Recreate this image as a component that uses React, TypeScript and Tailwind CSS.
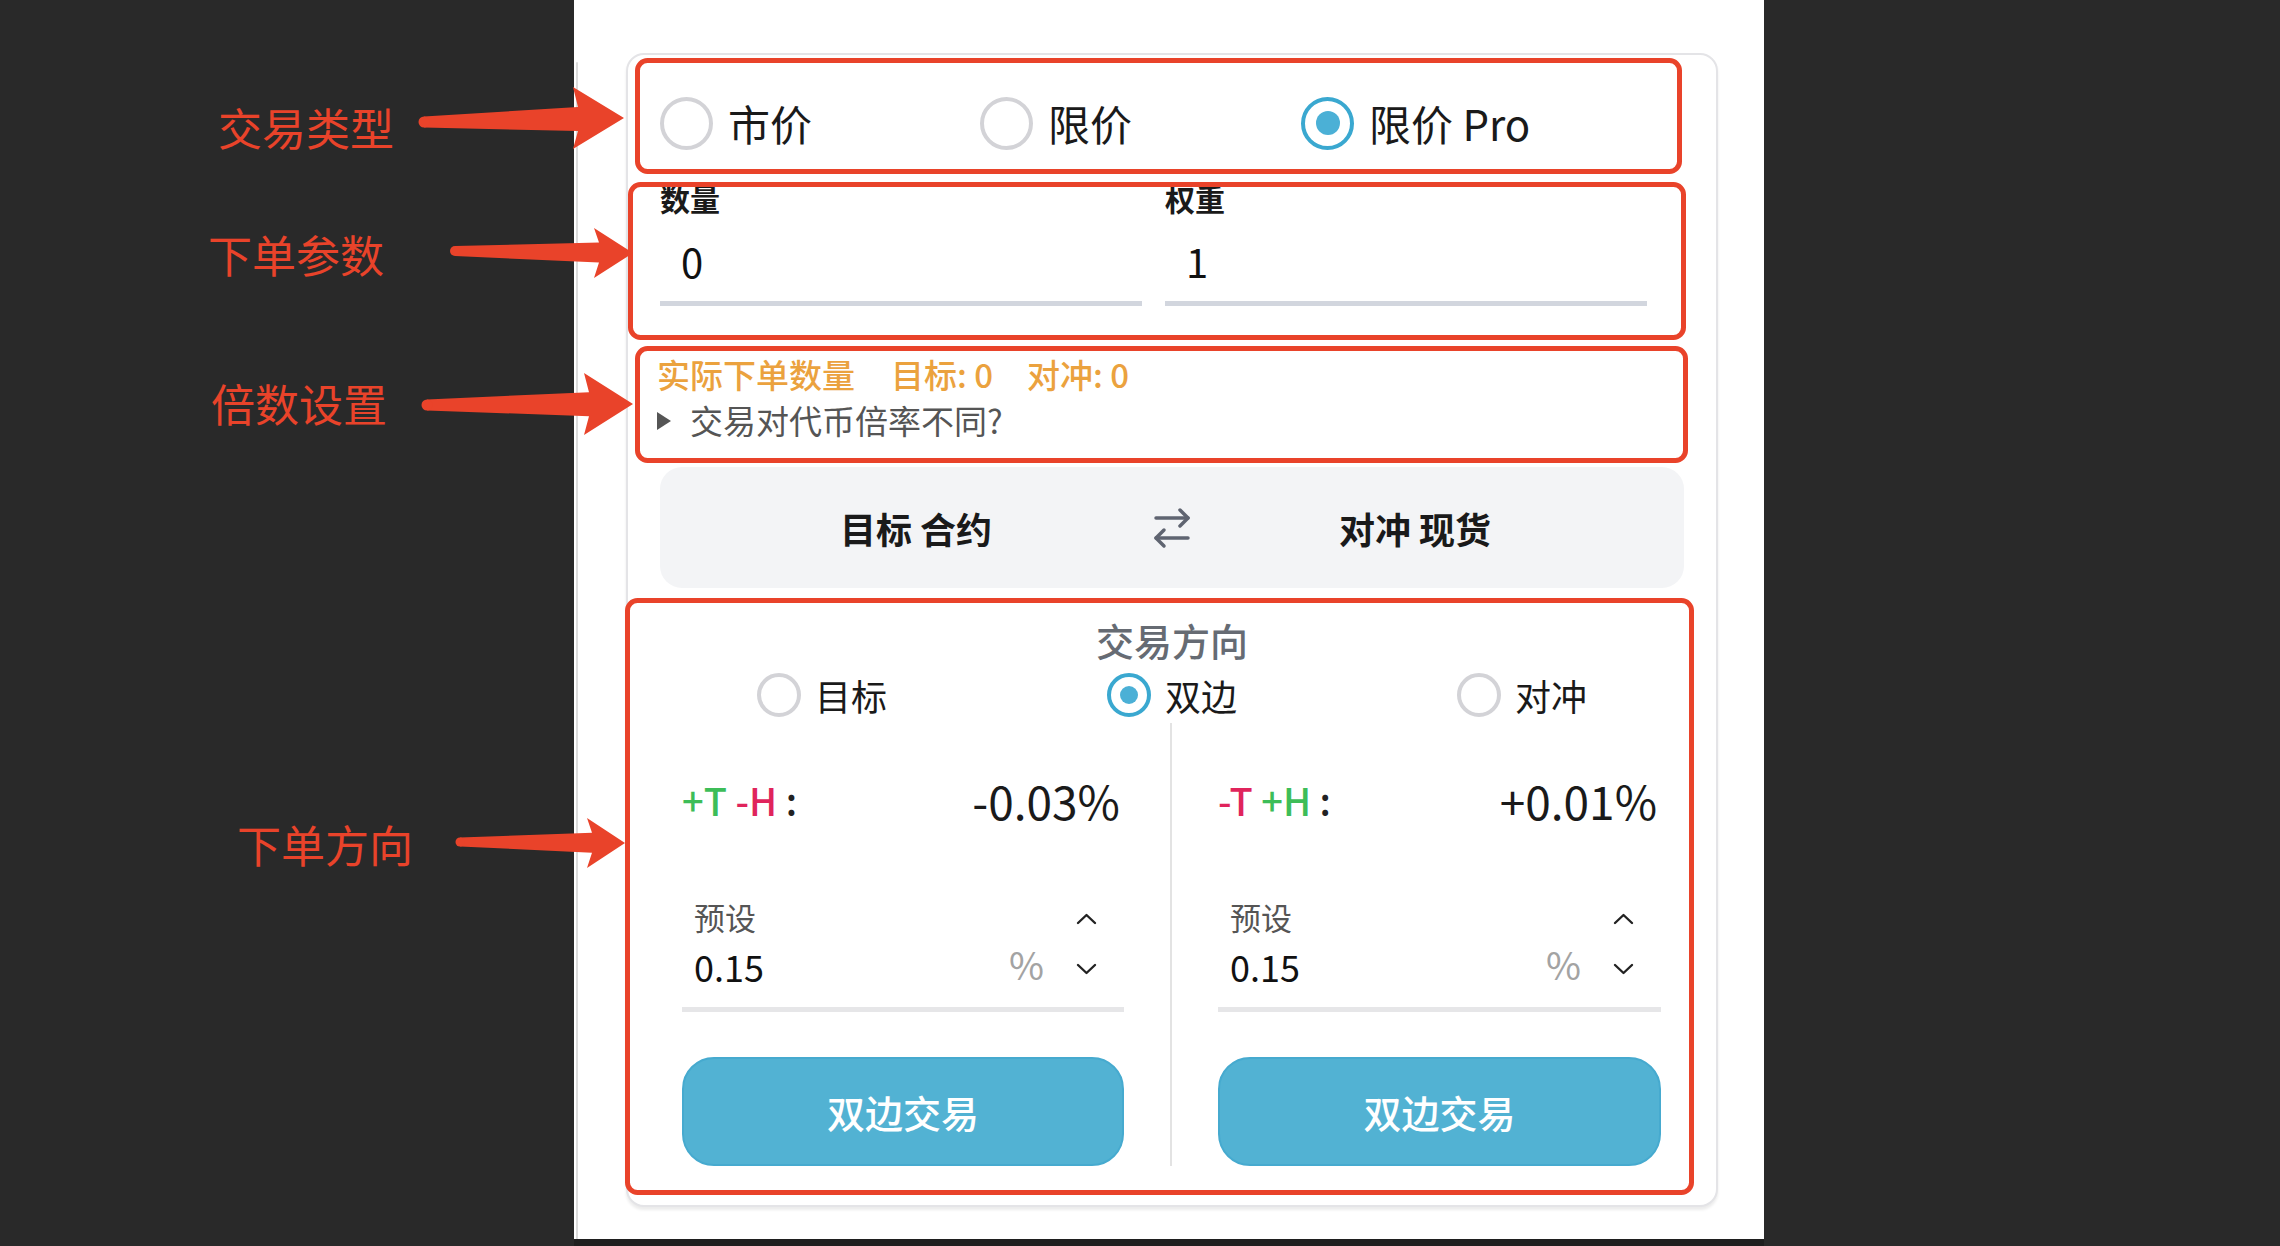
import { ArrowRightLeft } from 'lucide-react';

type ArrowSpec = {
  x0: number;
  y0: number;
  x1: number;
  y1: number;
  len: number;
  half: number;
  w0: number;
  w1: number;
};

const arrows: ArrowSpec[] = [
  { x0: 424, y0: 122, x1: 624, y1: 118, len: 51, half: 31, w0: 5.5, w1: 12 },
  { x0: 455, y0: 251, x1: 633, y1: 253, len: 39, half: 25, w0: 5, w1: 10 },
  { x0: 427, y0: 405, x1: 633, y1: 404, len: 49, half: 31, w0: 5.5, w1: 12 },
  { x0: 460, y0: 842, x1: 625, y1: 843, len: 38, half: 25, w0: 4.5, w1: 10 },
];

const boxes = [
  { x: 635, y: 58, w: 1047, h: 116 },
  { x: 628, y: 182, w: 1058, h: 158 },
  { x: 635, y: 346, w: 1053, h: 117 },
  { x: 625, y: 598, w: 1069, h: 597 },
];

function arrowPoints(a: ArrowSpec) {
  const bx = a.x1 - a.len;
  const by = a.y0 + ((a.y1 - a.y0) * (bx - a.x0)) / (a.x1 - a.x0);
  const pts = [
    [a.x0, a.y0 - a.w0],
    [bx + 5, by - a.w1],
    [bx, a.y1 - a.half],
    [a.x1, a.y1],
    [bx, a.y1 + a.half],
    [bx + 5, by + a.w1],
    [a.x0, a.y0 + a.w0],
  ];
  return pts.map((p) => p.join(',')).join(' ');
}

function Annotations() {
  return (
    <svg
      className="pointer-events-none absolute left-0 top-0"
      width={2280}
      height={1246}
      viewBox="0 0 2280 1246"
    >
      {boxes.map((b, i) => (
        <rect
          key={i}
          x={b.x + 2.5}
          y={b.y + 2.5}
          width={b.w - 5}
          height={b.h - 5}
          rx={10}
          fill="none"
          stroke="#e9432a"
          strokeWidth={5}
        />
      ))}
      {arrows.map((a, i) => (
        <g key={i} fill="#e9432a">
          <polygon points={arrowPoints(a)} />
          <circle cx={a.x0} cy={a.y0} r={a.w0} />
        </g>
      ))}
    </svg>
  );
}

function BigRadio({ label, checked }: { label: string; checked?: boolean }) {
  return (
    <div className="flex items-center gap-[15px]">
      <span
        className={`flex h-[53px] w-[53px] items-center justify-center rounded-full border-[4px] ${
          checked ? 'border-[#3aa8d0]' : 'border-[#d3d3d7]'
        }`}
      >
        {checked && <span className="h-[24px] w-[24px] rounded-full bg-[#4bb0d6]" />}
      </span>
      <span className="text-[42px] leading-none text-[#1a1a1a]">{label}</span>
    </div>
  );
}

function SmallRadio({ label, checked }: { label: string; checked?: boolean }) {
  return (
    <div className="flex items-center justify-center gap-[14px]">
      <span
        className={`flex h-[44px] w-[44px] items-center justify-center rounded-full border-[4px] ${
          checked ? 'border-[#3aa8d0]' : 'border-[#d3d3d7]'
        }`}
      >
        {checked && <span className="h-[18px] w-[18px] rounded-full bg-[#4bb0d6]" />}
      </span>
      <span className="text-[36px] leading-none text-[#1a1a1a]">{label}</span>
    </div>
  );
}

function Field({ label, value }: { label: string; value: string }) {
  return (
    <div>
      <div className="text-[30px] font-bold leading-[34px] text-[#1a1a1a]">{label}</div>
      <div className="flex h-[86px] items-center pl-[21px] pt-[6px] text-[40px] leading-none text-[#111]">
        {value}
      </div>
      <div className="h-[5px] bg-[#d2d6de]" />
    </div>
  );
}

function Chevron({ up }: { up?: boolean }) {
  return (
    <svg width="21" height="12" viewBox="0 0 21 12">
      <polyline
        points={up ? '2,10 10.5,2 19,10' : '2,2 10.5,10 19,2'}
        fill="none"
        stroke="#222"
        strokeWidth="2.4"
        strokeLinecap="round"
        strokeLinejoin="round"
      />
    </svg>
  );
}

function Side({
  first,
  firstColor,
  second,
  secondColor,
  value,
}: {
  first: string;
  firstColor: string;
  second: string;
  secondColor: string;
  value: string;
}) {
  return (
    <>
      <div className="mt-[47px] flex h-[60px] items-center justify-between pr-[4px]">
        <div className="text-[38px] font-medium leading-none text-[#222]">
          <span className={firstColor}>{first}</span> <span className={secondColor}>{second}</span> :
        </div>
        <div className="text-[46px] leading-none text-[#1a1a1a]">{value}</div>
      </div>

      <div className="mt-[69px]">
        <div className="flex pl-[12px] pr-[27px]">
          <div className="flex-1">
            <div className="text-[31px] leading-[36px] text-[#555]">预设</div>
            <div className="mt-[9px] h-[44px] text-[36px] leading-[44px] text-[#111]">0.15</div>
          </div>
          <div className="mr-[32px] self-end pb-[2px] text-[38px] leading-[44px] text-[#a3a3a3]">%</div>
          <div className="flex flex-col justify-between pb-[13px] pt-[14px]">
            <Chevron up />
            <Chevron />
          </div>
        </div>
        <div className="mt-[19px] h-[5px] bg-[#e6e6e8]" />
      </div>

      <button className="mt-[45px] flex h-[109px] w-full items-center justify-center rounded-[32px] border-2 border-[#46aacf] bg-[#52b2d3] text-[38px] font-medium text-white">
        双边交易
      </button>
    </>
  );
}

function OrderCard() {
  return (
    <div className="ml-[48px] mt-[53px] h-[1154px] w-[1092px] rounded-[18px] border-2 border-[#e4e4e7] bg-white px-[32px] pt-[41px] shadow-[0_3px_3px_rgba(0,0,0,0.08)]">
      <div className="grid h-[54px] grid-cols-[320px_321px_1fr] items-center">
        <BigRadio label="市价" />
        <BigRadio label="限价" />
        <BigRadio label="限价 Pro" checked />
      </div>

      <div className="mt-[31px] grid grid-cols-[482px_482px] gap-x-[23px]">
        <Field label="数量" value="0" />
        <Field label="权重" value="1" />
      </div>

      <div className="-ml-[3px] mt-[51px] text-[33px] font-medium leading-[35px] text-[#eba23e]">
        <span>实际下单数量</span>
        <span className="ml-[36px]">目标: 0</span>
        <span className="ml-[34px]">对冲: 0</span>
      </div>
      <div className="-ml-[3px] mt-[11px] flex items-center gap-[19px] text-[33px] leading-[35px] text-[#555]">
        <svg width="14" height="18" viewBox="0 0 14 18">
          <polygon points="0,0 14,9 0,18" fill="#555" />
        </svg>
        <span>交易对代币倍率不同?</span>
      </div>

      <div className="mt-[29px] grid h-[121px] grid-cols-[1fr_0px_1fr] items-center rounded-[22px] bg-[#f3f4f6] text-[36px] font-bold leading-none text-[#1a1a1a]">
        <div className="text-center">目标 合约</div>
        <div className="flex justify-center">
          <ArrowRightLeft className="shrink-0" size={48} strokeWidth={1.75} color="#5f6471" />
        </div>
        <div className="pr-[26px] text-center">对冲 现货</div>
      </div>

      <div className="mt-[31px] text-center text-[38px] font-medium leading-[42px] text-[#666b73]">交易方向</div>
      <div className="-mx-[13px] mt-[12px] grid h-[44px] grid-cols-3 items-center">
        <SmallRadio label="目标" />
        <SmallRadio label="双边" checked />
        <SmallRadio label="对冲" />
      </div>

      <div className="mt-[6px] grid grid-cols-2">
        <div className="border-r-2 border-[#e3e3e3] pl-[22px] pr-[46px]">
          <Side
            first="+T"
            firstColor="text-[#3dbd58]"
            second="-H"
            secondColor="text-[#e0245c]"
            value="-0.03%"
          />
        </div>
        <div className="pl-[46px] pr-[23px]">
          <Side
            first="-T"
            firstColor="text-[#e0245c]"
            second="+H"
            secondColor="text-[#3dbd58]"
            value="+0.01%"
          />
        </div>
      </div>
    </div>
  );
}

export default function App() {
  return (
    <div className="relative flex h-[1246px] w-[2280px] overflow-hidden bg-[#292929] font-['Noto_Sans_CJK_SC','Noto_Sans',sans-serif]">
      <div className="flex w-[574px] shrink-0 flex-col text-[44px] leading-[44px] text-[#e9432a]">
        <div className="ml-[218px] mt-[105px]">交易类型</div>
        <div className="ml-[208px] mt-[83px]">下单参数</div>
        <div className="ml-[211px] mt-[105px]">倍数设置</div>
        <div className="ml-[237px] mt-[397px]">下单方向</div>
      </div>

      <div className="flex w-[1190px] shrink-0 flex-col">
        <div className="flex h-[1239px] bg-white">
          <div className="ml-[2px] mt-[62px] w-[2px] rounded-t-full bg-[#dcdcdc]" />
          <OrderCard />
        </div>
        <div className="flex-1 bg-[#1f1f1f]" />
      </div>

      <div className="flex-1" />

      <Annotations />
    </div>
  );
}
